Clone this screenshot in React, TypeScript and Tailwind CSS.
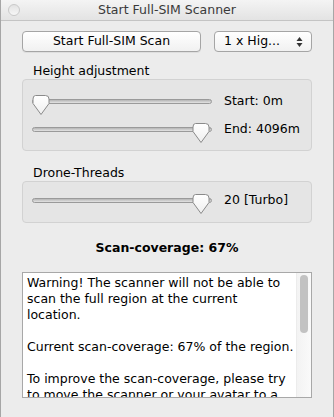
import React from "react";

const FONT = { fontFamily: '"DejaVu Sans", "Liberation Sans", sans-serif' };

function Thumb() {
  return (
    <svg width="18" height="21" viewBox="0 0 18 21" className="absolute top-[-5px]">
      <defs>
        <linearGradient id="thumbFill" x1="0" y1="0" x2="0" y2="1">
          <stop offset="0" stopColor="#ffffff" />
          <stop offset="1" stopColor="#efefef" />
        </linearGradient>
      </defs>
      <path
        d="M3.5 0.5 H13.5 Q17 0.5 17 4 V8.5 L9 19.5 L1 8.5 V4 Q1 0.5 3.5 0.5 Z"
        fill="url(#thumbFill)"
        stroke="#8a8a8a"
        strokeWidth="1"
      />
    </svg>
  );
}

function Slider({ pos, label }: { pos: "start" | "end"; label: string }) {
  return (
    <div className="flex items-center h-[20px]">
      <div className="relative w-[180px] h-[5px] shrink-0 rounded-full border border-[#9a9a9a] bg-gradient-to-b from-[#b5b5b5] to-[#e4e4e4]">
        <div className={pos === "start" ? "absolute left-[-1px] top-0" : "absolute right-[1px] top-0"}>
          <div className="relative w-[18px]">
            <Thumb />
          </div>
        </div>
      </div>
      <span className="ml-[12px] whitespace-nowrap text-[12.5px] text-black">{label}</span>
    </div>
  );
}

function Group({ title, children }: { title: string; children: React.ReactNode }) {
  return (
    <div className="mx-[21px]">
      <div className="pl-[11px] text-[12.5px] leading-[16px] text-black">{title}</div>
      <div className="rounded-[4px] border border-[#d2d2d2] bg-[#e5e5e5] pl-[9px] pr-2">{children}</div>
    </div>
  );
}

export default function App() {
  return (
    <div
      style={FONT}
      className="w-[334px] h-[417px] overflow-hidden bg-[#ececec] border-x border-[#a6a6a6] flex flex-col"
    >
      <div className="h-[21px] shrink-0 relative flex items-center justify-center bg-gradient-to-b from-[#f4f4f4] to-[#e3e3e3] border-b border-[#c4c4c4]">
        <div className="absolute left-[7px] top-[4px] w-[12px] h-[12px] rounded-full border border-[#c9c9c9] bg-gradient-to-b from-[#e2e2e2] to-[#f7f7f7]" />
        <span className="text-[12.5px] text-[#3a3a3a]">Start Full-SIM Scanner</span>
      </div>

      <div className="flex items-center px-[21px] mt-[10px] gap-[13px] shrink-0">
        <button className="w-[179px] h-[21px] rounded-[4px] border border-[#a5a5a5] bg-gradient-to-b from-[#ffffff] to-[#f1f1f1] text-[12.5px] text-black shadow-[0_1px_0_rgba(0,0,0,0.06)]">
          Start Full-SIM Scan
        </button>
        <div className="w-[98px] h-[21px] rounded-[4px] border border-[#a5a5a5] bg-gradient-to-b from-[#ffffff] to-[#f1f1f1] flex items-center pl-[9px] pr-[8px] text-[12.5px] text-black">
          <span className="flex-1">1 x Hig...</span>
          <svg width="7" height="12" viewBox="0 0 7 12">
            <path d="M3.5 1 L6.5 5 H0.5 Z" fill="#333" />
            <path d="M3.5 11 L6.5 7 H0.5 Z" fill="#333" />
          </svg>
        </div>
      </div>

      <div className="mt-[11px] shrink-0">
        <Group title="Height adjustment">
          <div className="pt-[11px] pb-[11px] flex flex-col gap-[8px]">
            <Slider pos="start" label="Start: 0m" />
            <Slider pos="end" label="End: 4096m" />
          </div>
        </Group>
      </div>

      <div className="mt-[14px] shrink-0">
        <Group title="Drone-Threads">
          <div className="pt-[8px] pb-[12px]">
            <Slider pos="end" label="20 [Turbo]" />
          </div>
        </Group>
      </div>

      <div className="mt-[17px] shrink-0 text-center text-[12.5px] font-bold text-black leading-[16px]">
        Scan-coverage: 67%
      </div>

      <div className="mx-[21px] mt-[16px] h-[126px] shrink-0 border border-[#a8a8a8] bg-white flex overflow-hidden">
        <div className="flex-1 pl-[4px] pt-[2px] text-[12.5px] leading-[16px] text-black">
          <p>
            Warning! The scanner will not be able to scan the full region at the current
            <br />
            location.
          </p>
          <p className="mt-[16px]">Current scan-coverage: 67% of the region.</p>
          <p className="mt-[16px]">To improve the scan-coverage, please try to move the scanner or your avatar to a more central position.</p>
        </div>
        <div className="w-[15px] shrink-0 bg-gradient-to-r from-[#f3f3f3] to-[#fafafa] border-l border-[#ececec] pt-[2px] pl-[3px]">
          <div className="w-[8px] h-[58px] rounded-full bg-[#c2c2c2]" />
        </div>
      </div>
    </div>
  );
}
